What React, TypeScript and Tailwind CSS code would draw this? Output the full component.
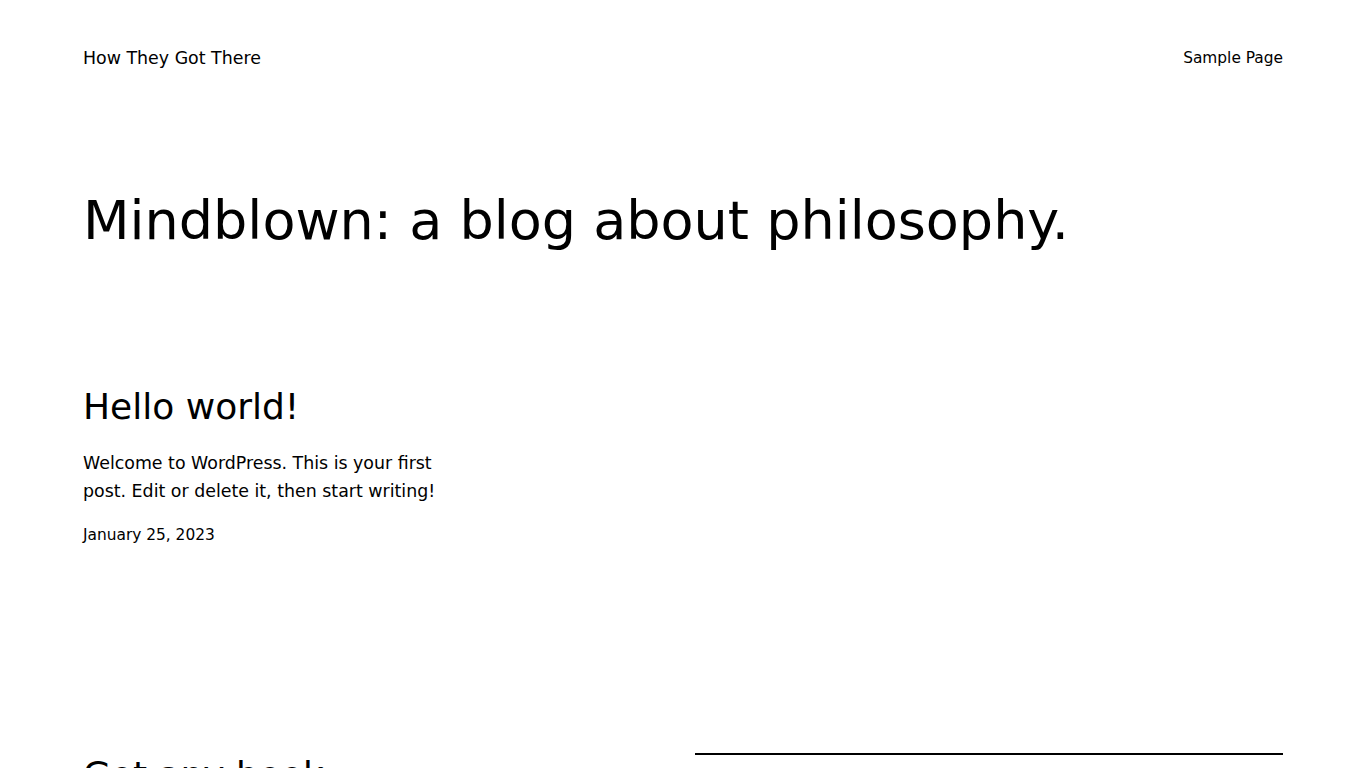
export default function App() {
  return (
    <div className="min-h-screen bg-white text-black font-['DejaVu_Sans',sans-serif]">
      <div className="px-[83px]">
        {/* Header */}
        <header className="flex items-center justify-between pt-[44px]">
          <a href="#" className="text-[17.4px] leading-[28px]">
            How They Got There
          </a>
          <nav>
            <a href="#" className="text-[15.4px] leading-[28px]">
              Sample Page
            </a>
          </nav>
        </header>

        {/* Hero title */}
        <h1 className="mt-[115px] text-[54px] leading-[68px] font-normal">
          Mindblown: a blog about philosophy.
        </h1>

        {/* Posts */}
        <div className="mt-[130px] grid grid-cols-3 gap-6">
          <article>
            <h2 className="text-[36px] leading-[44px] font-normal">Hello world!</h2>
            <p className="mt-[20px] text-[17.4px] leading-[28px]">
              Welcome to WordPress. This is your first post. Edit or delete it, then start writing!
            </p>
            <div className="mt-[18px] text-[15.4px] leading-[24px]">January 25, 2023</div>
          </article>
        </div>

        {/* Footer call-out */}
        <section className="mt-[206px] grid grid-cols-2 gap-6 pb-16">
          <h2 className="text-[36px] leading-[44px] font-normal">
            Got any book recommendations?
          </h2>
          <div>
            <hr className="border-0 h-[2px] bg-black" />
            <p className="mt-6 text-[17.4px] leading-[28px]">
              Get in touch and let us know what you are reading.
            </p>
            <a
              href="#"
              className="mt-6 inline-block bg-black px-6 py-3 text-[17.4px] leading-[28px] text-white"
            >
              Get In Touch
            </a>
          </div>
        </section>
      </div>
    </div>
  );
}
